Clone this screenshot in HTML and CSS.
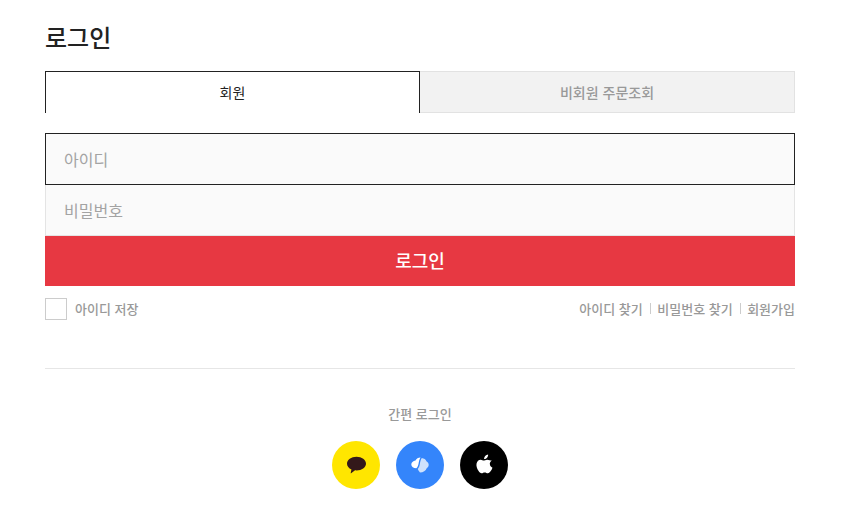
FILE: index.html
```html
<!DOCTYPE html>
<html lang="ko">
<head>
    <meta charset="UTF-8">
    <meta name="viewport" content="width=device-width, initial-scale=1.0">
    <title>로그인</title>
    <link rel="stylesheet" href="styles.css">
</head>
<body>

    <div class="container">
        <h1>로그인</h1>

        <!-- 탭 -->
        <div class="tabs">
            <a class="tab active">회원</a>
            <a class="tab">비회원 주문조회</a>
        </div>

        <form class="login-form">
            <input class="field focus" type="text" placeholder="아이디">
            <input class="field" type="password" placeholder="비밀번호">
            <button class="login-btn" type="button">로그인</button>
        </form>

        <div class="login-util">
            <label class="save-id"><span class="check"></span><span class="save-text">아이디 저장</span></label>
            <ul class="links">
                <li>아이디 찾기</li>
                <li>비밀번호 찾기</li>
                <li>회원가입</li>
            </ul>
        </div>

        <!-- 간편 로그인 -->
        <div class="sns">
            <p>간편 로그인</p>
            <div class="sns-list">
                <a class="sns-btn kakao">
                    <svg width="19" height="19" viewBox="0 0 18 18"><path fill="#33181a" d="M9 .8C4 .8 0 3.700 0 7.300c0 2.300 1.700 4.300 4.200 5.400l-.7 3.300c-.1.300.2.500.4.300l3.700-2.700c.5.100.9.100 1.400.1 5 0 9-2.900 9-6.400S14 .8 9 .8z"/></svg>
                </a>
                <a class="sns-btn naver">
                    <svg width="18" height="16" viewBox="0 0 18 16"><path fill="#fff" d="M9.500.5C7.500.4 5.500 1.500 4.500 3.500 2 4 .3 5.500.3 7.500c0 2.200 2.200 3.800 5 3.800 1.200-1 1.800-2.500 2.200-4.300.4-2.200.8-4.700 2-6.500z"/><path fill="#cfe2fc" d="M10.800 1C9.700 2.600 9.200 4.900 8.800 7.200c-.4 2-1 3.500-2.100 4.800.5 1.300 1.300 2.400 2.300 3.500 3.300-.2 5.800-1.900 6.700-4.300 1.300-.5 2-1.900 2-3.400 0-1.600-.9-2.900-2.300-3.600C14.800 2.500 13 1.300 10.800 1z"/></svg>
                </a>
                <a class="sns-btn apple">
                    <svg width="19" height="22" viewBox="0 0 20 22"><path fill="#fff" d="M13.800 1c.1 1.300-.4 2.500-1.100 3.300-.8.900-1.900 1.600-3.100 1.500-.1-1.200.4-2.400 1.100-3.200C11.500 1.700 12.800 1.100 13.800 1zM17.700 7.300c-1.500 1-2.200 2.300-2.100 3.800.1 1.800 1.200 3.100 2.800 3.800-.4 1.200-1 2.400-1.800 3.500-.9 1.300-1.800 2.300-3.100 2.300-1.300 0-1.700-.8-3.300-.8-1.600 0-2.100.8-3.300.8-1.300 0-2.200-1.100-3.100-2.400C2 16 1.200 13.200 1.600 10.800 2 8.200 3.900 6.500 6 6.500c1.300 0 2.400.9 3.200.9.800 0 2-1 3.600-1 1.800.1 3.600.9 4.900.9z"/></svg>
                </a>
            </div>
        </div>
    </div>

</body>
</html>
```

FILE: styles.css
```css
* {
    margin: 0;
    padding: 0;
    box-sizing: border-box;
}

body {
    background: #fff;
    font-family: "Noto Sans CJK KR", "Noto Sans", sans-serif;
    color: #222;
}

.container {
    width: 750px;
    margin-left: 45px;
    padding-top: 19px;
}

h1 {
    font-size: 24px;
    font-weight: 500;
    line-height: 36px;
    margin-bottom: 16px;
    color: #222;
}

.tabs {
    display: flex;
    height: 42px;
    margin-bottom: 20px;
}

.tab {
    flex: 1;
    display: flex;
    justify-content: center;
    align-items: center;
    font-size: 14px;
    font-weight: 500;
    color: #999;
    background: #f2f2f2;
    border: 1px solid #e2e2e2;
    border-left: none;
}

.tab.active {
    flex: 0 0 375px;
    padding-bottom: 1px;
    font-weight: 400;
    color: #222;
    background: #fff;
    border: 1px solid #222;
    border-bottom: none;
}

.login-form {
    display: flex;
    flex-direction: column;
}

.field {
    height: 51px;
    padding: 0 18px;
    font-family: inherit;
    font-size: 16px;
    background: #fafafa;
    border: 1px solid #e4e4e4;
    border-top: none;
    outline: none;
}

.field::placeholder {
    color: #a3a3a3;
}

.field.focus {
    height: 52px;
    border: 1px solid #222;
}

.login-btn {
    height: 50px;
    padding-bottom: 2px;
    font-family: inherit;
    font-size: 18px;
    font-weight: 500;
    color: #fff;
    background: #e73842;
    border: none;
}

.login-util {
    display: flex;
    justify-content: space-between;
    align-items: center;
    height: 22px;
    margin-top: 12px;
    font-size: 13px;
    font-weight: 500;
    color: #999;
}

.save-id {
    display: flex;
    align-items: center;
    gap: 8px;
}

.save-text {
    margin-bottom: 2px;
}

.check {
    width: 22px;
    height: 22px;
    border: 1px solid #ccc;
    background: #fff;
}

.links {
    display: flex;
    margin-bottom: 2px;
    list-style: none;
}

.links li + li {
    margin-left: 7.5px;
    padding-left: 7px;
    background: linear-gradient(#ccc, #ccc) no-repeat left center / 1px 11px;
}

.sns {
    margin-top: 48px;
    padding-top: 36px;
    border-top: 1px solid #e6e6e6;
    text-align: center;
}

.sns p {
    font-size: 13px;
    font-weight: 500;
    line-height: 18px;
    color: #999;
}

.sns-list {
    display: flex;
    justify-content: center;
    gap: 16px;
    margin-top: 18px;
}

.sns-btn {
    display: flex;
    justify-content: center;
    align-items: center;
    width: 48px;
    height: 48px;
    border-radius: 50%;
}

.kakao {
    background: #ffe600;
}

.naver {
    background: #3485fb;
}

.apple {
    background: #000;
}

.apple svg {
    margin-bottom: 3px;
}
```
